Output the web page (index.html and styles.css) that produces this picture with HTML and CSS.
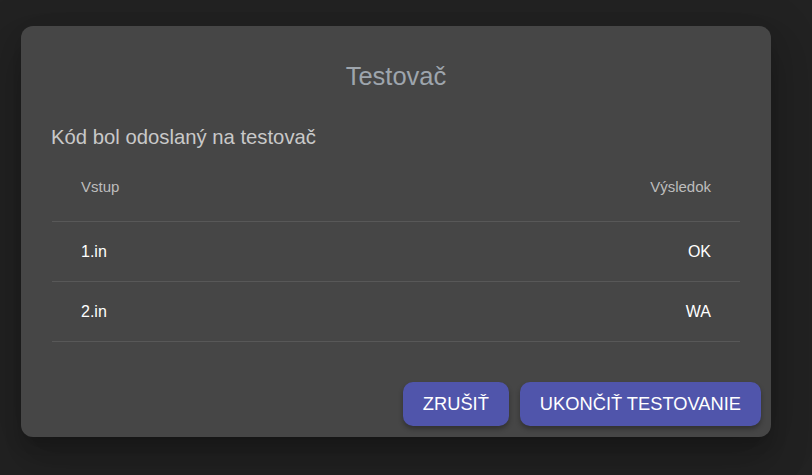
FILE: index.html
```html
<!DOCTYPE html>
<html lang="sk">
<head>
<meta charset="utf-8">
<title>Testovač</title>
<link rel="stylesheet" href="styles.css">
</head>
<body>
<div class="backdrop">
  <div class="dialog">
    <h2 class="title">Testovač</h2>
    <p class="subtitle">Kód bol odoslaný na testovač</p>
    <table class="results">
      <thead>
        <tr><th class="left">Vstup</th><th class="right">Výsledok</th></tr>
      </thead>
      <tbody>
        <tr><td class="left">1.in</td><td class="right">OK</td></tr>
        <tr><td class="left">2.in</td><td class="right">WA</td></tr>
      </tbody>
    </table>
    <div class="actions">
      <button class="btn">ZRUŠIŤ</button>
      <button class="btn">UKONČIŤ TESTOVANIE</button>
    </div>
  </div>
</div>
</body>
</html>
```
FILE: styles.css
```css
html, body {
  margin: 0;
  padding: 0;
  background: #222222;
  font-family: "Liberation Sans", Arial, sans-serif;
}
.backdrop {
  width: 812px;
  height: 475px;
  padding: 26px 0 0 21px;
  box-sizing: border-box;
}
.dialog {
  width: 750px;
  height: 411px;
  box-sizing: border-box;
  background: #464646;
  border-radius: 12px;
  box-shadow: 0 11px 15px -7px rgba(0,0,0,0.2), 0 24px 38px 3px rgba(0,0,0,0.14), 0 9px 46px 8px rgba(0,0,0,0.12);
  padding: 36px 10px 11px 30px;
  display: flex;
  flex-direction: column;
}
.title {
  margin: 0;
  font-weight: normal;
  font-size: 25.5px;
  line-height: 28px;
  color: #9ea5ad;
  text-align: center;
  padding-right: 20px;
}
.subtitle {
  margin: 36px 0 0 0;
  font-size: 20.3px;
  line-height: 23px;
  color: #c9c9c9;
}
.results {
  margin: 7px 0 0 1px;
  width: 688px;
  border-collapse: collapse;
}
.results th {
  font-weight: normal;
  font-size: 15px;
  line-height: 17px;
  color: #bdbdbd;
  padding: 22px 29px 26px 29px;
  border-bottom: 1px solid #585858;
}
.results td {
  font-size: 16px;
  line-height: 18px;
  color: #ffffff;
  height: 59px;
  padding: 0 29px;
  border-bottom: 1px solid #585858;
}
.left { text-align: left; }
.right { text-align: right; }
.actions {
  margin-top: auto;
  display: flex;
  justify-content: flex-end;
  gap: 11px;
}
.btn {
  height: 44px;
  border: none;
  border-radius: 10px;
  background: #5055ab;
  color: #ffffff;
  font-family: "Liberation Sans", Arial, sans-serif;
  font-size: 18.3px;
  padding: 0 20px;
  box-shadow: 0 3px 5px rgba(0,0,0,0.3);
}
```
